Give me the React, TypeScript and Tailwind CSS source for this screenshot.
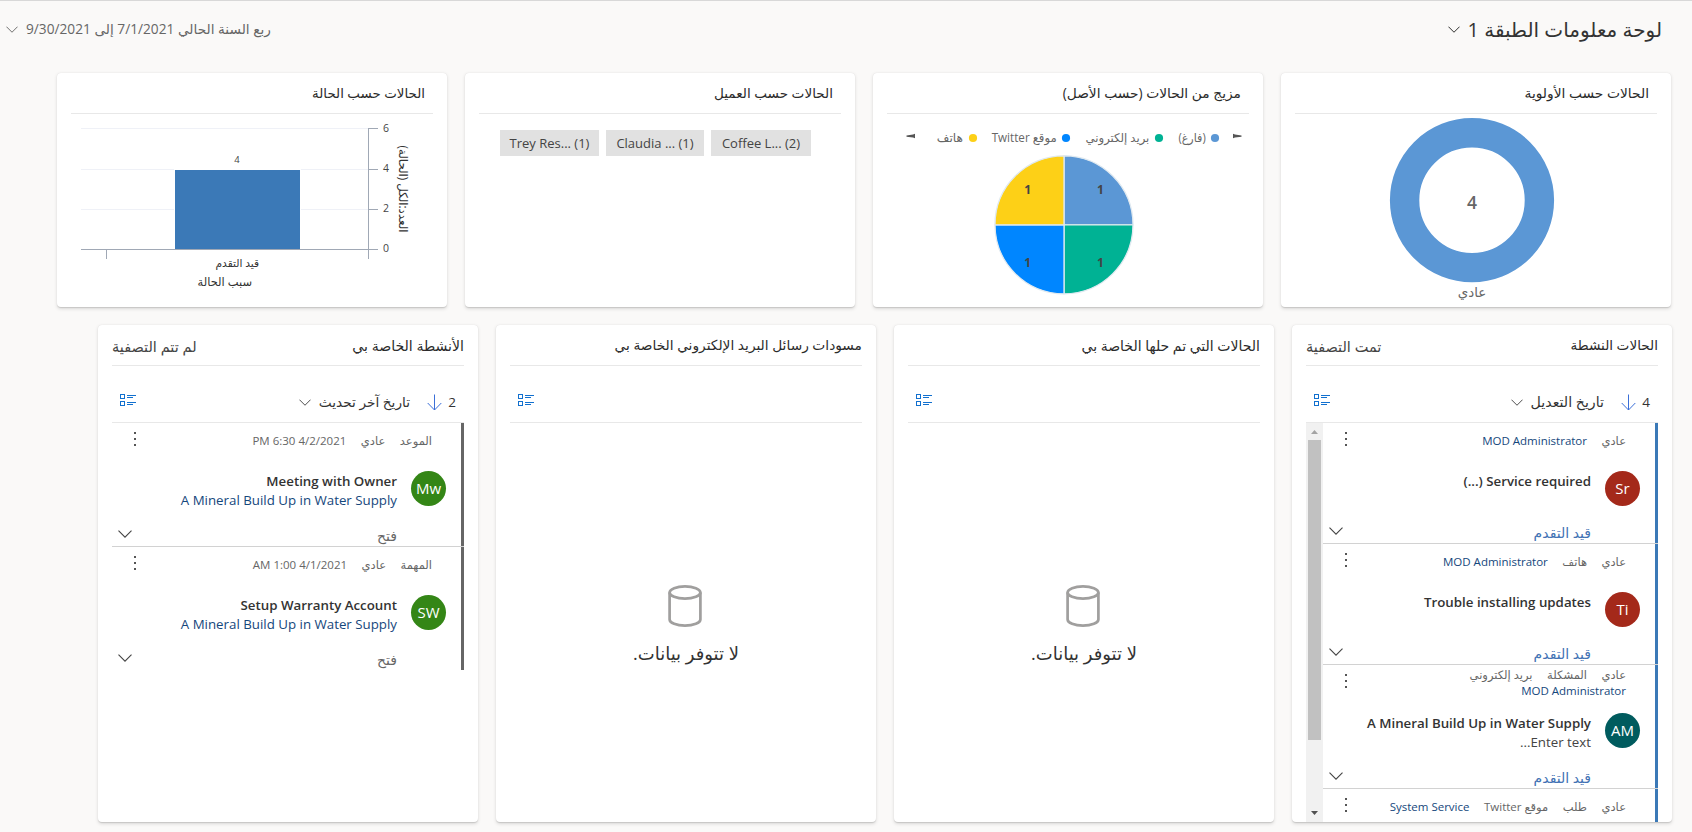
import React from "react";

const FONT = "font-['Open_Sans','DejaVu_Sans',sans-serif]";

function Chevron({ className, stroke = "#444" }: { className?: string; stroke?: string }) {
  return (
    <svg viewBox="0 0 14 8" className={className ?? "h-2 w-3.5"} fill="none" stroke={stroke} strokeWidth="1.1">
      <path d="M0.5 0.7 7 7.2 13.5 0.7" />
    </svg>
  );
}

function ListIcon() {
  return (
    <svg viewBox="0 0 17 13" className="h-[13px] w-[17px]" fill="none" stroke="#1170cf" strokeWidth="1" shapeRendering="crispEdges">
      <rect x="0.5" y="0.5" width="4" height="4" />
      <rect x="0.5" y="7.5" width="4" height="4" />
      <path d="M7 1.5h9M7 3.5h6M7 8.5h9M7 10.5h6" />
    </svg>
  );
}

function SortArrow() {
  return (
    <svg viewBox="0 0 15 17" className="h-[17px] w-[15px]" fill="none" stroke="#3b6fd8" strokeWidth="1">
      <path d="M7.5 0.5V16M0.7 9l6.8 7 6.8-7" />
    </svg>
  );
}

function Dots() {
  return (
    <svg viewBox="0 0 2 14" className="h-[14px] w-[2px]" fill="#555" shapeRendering="crispEdges">
      <rect x="0" y="0" width="2" height="2" />
      <rect x="0" y="6" width="2" height="2" />
      <rect x="0" y="12" width="2" height="2" />
    </svg>
  );
}

function Cylinder() {
  return (
    <svg viewBox="0 0 34 42" className="h-[42px] w-[34px]" fill="none" stroke="#a09f9e" strokeWidth="2.7">
      <ellipse cx="17" cy="7.5" rx="15.4" ry="6.1" />
      <path d="M1.6 7.5v27c0 3.4 6.9 6.1 15.4 6.1s15.4-2.7 15.4-6.1v-27" />
    </svg>
  );
}

const CARD = "bg-white rounded-[4px] shadow-[0_1.6px_3.6px_rgba(0,0,0,0.13),0_0.3px_0.9px_rgba(0,0,0,0.11)]";

function ChartCard({ title, size, children }: { title: string; size: string; children: React.ReactNode }) {
  return (
    <section className={`flex h-[234px] w-[390px] shrink-0 flex-col overflow-hidden ${CARD}`}>
      <div className="mx-[14px] flex h-[41px] shrink-0 items-center border-b border-[#e8e8e8] pt-px pr-2">
        <h2 className={`whitespace-nowrap text-[#2b2b2b] ${size}`}>{title}</h2>
      </div>
      {children}
    </section>
  );
}

function Donut() {
  return (
    <svg viewBox="0 0 390 193" className="h-[193px] w-[390px]" direction="ltr">
      <circle cx="191" cy="86.2" r="67.4" fill="none" stroke="#5b97d5" strokeWidth="29.4" />
      <text x="191" y="95" textAnchor="middle" fontSize="17.5" fontWeight="600" fill="#666">4</text>
      <text x="191" y="182.5" textAnchor="middle" fontSize="13.5" fill="#666" textLength="28.5" lengthAdjust="spacingAndGlyphs">عادي</text>
    </svg>
  );
}

const LEGEND = [
  { x: 342, right: 332.7, w: 27.3, label: "(فارغ)", color: "#5b97d5" },
  { x: 286, right: 276.3, w: 63.7, label: "بريد إلكتروني", color: "#00b294" },
  { x: 193, right: 183.7, w: 65, label: "موقع Twitter", color: "#0086ff" },
  { x: 100, right: 90, w: 26.2, label: "هاتف", color: "#fdd017" },
];

function Pie() {
  return (
    <svg viewBox="0 0 390 193" className="h-[193px] w-[390px]">
      <path d="M360 19.7v4.6l2-0.8 6.5-0.8v-1.2l-6.5-1z" fill="#555" />
      <path d="M42 19.7v4.6l-2-0.8-6.5-0.8v-1.2l6.5-1z" fill="#555" />
      {LEGEND.map((l) => (
        <g key={l.x}>
          <circle cx={l.x} cy="24" r="4.1" fill={l.color} />
          <text x={l.right} y="28" fontSize="12" fill="#666" direction="rtl" textAnchor="start" textLength={l.w} lengthAdjust="spacingAndGlyphs">
            {l.label}
          </text>
        </g>
      ))}
      <g stroke="#dfe9f0" strokeWidth="1.3">
        <path d="M191 110.8V41.8A69 69 0 0 1 260 110.8Z" fill="#5b97d5" />
        <path d="M191 110.8H260A69 69 0 0 1 191 179.8Z" fill="#00b294" />
        <path d="M191 110.8V179.8A69 69 0 0 1 122 110.8Z" fill="#0086ff" />
        <path d="M191 110.8H122A69 69 0 0 1 191 41.8Z" fill="#fdd017" />
      </g>
      <g fontSize="12" fontWeight="700" fill="#444" textAnchor="middle">
        <text x="227.5" y="80">1</text>
        <text x="154.7" y="80">1</text>
        <text x="227.5" y="153">1</text>
        <text x="154.7" y="153">1</text>
      </g>
    </svg>
  );
}

function Bars() {
  return (
    <svg viewBox="0 0 390 193" className="h-[193px] w-[390px]">
      <path d="M24 14.5H311M24 55.5H311M24 95.5H311" stroke="#eff1f7" />
      <rect x="117" y="55" width="127" height="80" fill="#fff" />
      <rect x="118" y="56" width="125" height="79" fill="#3b79b7" />
      <path d="M24 135.5H321M311.5 14V145M311 14.5H321M311 55.5H321M311 95.5H321M49.5 135V145" stroke="#a0a8b5" fill="none" />
      <g fontSize="10.5" fill="#444" textAnchor="middle">
        <text x="329" y="18">6</text>
        <text x="329" y="58">4</text>
        <text x="329" y="98">2</text>
        <text x="329" y="138">0</text>
        <text x="180" y="49" fontSize="9.5">4</text>
      </g>
      <text x="202" y="153" fontSize="11" fill="#333" direction="rtl" textLength="43.5" lengthAdjust="spacingAndGlyphs">قيد التقدم</text>
      <text x="195" y="172" fontSize="12" fill="#333" direction="rtl" textLength="54.5" lengthAdjust="spacingAndGlyphs">سبب الحالة</text>
      <g transform="translate(342 118.5) rotate(90)">
        <text x="0" y="0" fontSize="12" fill="#333" direction="rtl" textLength="87" lengthAdjust="spacingAndGlyphs">العدد:الكل (الحالة)</text>
      </g>
    </svg>
  );
}

function Chips() {
  return (
    <div className="flex gap-[7px] pt-4 pr-11 text-[13px] text-[#444]" dir="rtl">
      <div className="flex h-[26px] w-[100px] items-center justify-center bg-[#e1e1e1] pt-0.5"><span dir="ltr">Coffee L... (2)</span></div>
      <div className="flex h-[26px] w-[98px] items-center justify-center bg-[#e1e1e1] pt-0.5"><span dir="ltr">Claudia ... (1)</span></div>
      <div className="flex h-[26px] w-[99px] items-center justify-center bg-[#e1e1e1] pt-0.5"><span dir="ltr">Trey Res... (1)</span></div>
    </div>
  );
}

type StreamProps = {
  title: string;
  titleSize: string;
  filter?: string;
  count?: string;
  sort?: string;
  sortSize?: string;
  children: React.ReactNode;
};

function Stream({ title, titleSize, filter, count, sort, sortSize, children }: StreamProps) {
  return (
    <section className={`flex h-[497px] w-[380px] shrink-0 flex-col overflow-hidden px-[14px] ${CARD}`}>
      <div className="flex h-[41px] shrink-0 items-center justify-between border-b border-[#e8e8e8]">
        <h2 className={`pt-px whitespace-nowrap text-[#2b2b2b] ${titleSize}`}>{title}</h2>
        {filter && <span className="pt-[3px] text-[14.5px] whitespace-nowrap text-[#444]">{filter}</span>}
      </div>
      <div className="flex h-[57px] shrink-0 items-center border-b border-[#e8e8e8] pr-2 pl-2">
        {count && (
          <div className="flex h-9 items-center pt-4">
            <span className="w-[7px] text-[13.5px] text-[#333]">{count}</span>
            <span className="mr-[7px]"><SortArrow /></span>
            <span className={`mr-[17px] whitespace-nowrap text-[#333] ${sortSize}`}>{sort}</span>
            <span className="mr-2"><Chevron className="h-[7px] w-3" /></span>
          </div>
        )}
        <span className="mr-auto pt-3"><ListIcon /></span>
      </div>
      {children}
    </section>
  );
}

type Meta = { text: string; link?: boolean };

type RowProps = {
  height: string;
  bar: string;
  meta: Meta[];
  wrapped?: Meta;
  initials?: string;
  avatar?: string;
  title?: string;
  sub?: string;
  subLink?: boolean;
  status?: string;
  statusColor?: string;
  last?: boolean;
};

function Row({ height, bar, meta, wrapped, initials, avatar, title, sub, subLink, status, statusColor, last }: RowProps) {
  return (
    <div className={`flex shrink-0 flex-col ${last ? "" : "border-b border-[#d2d2d2]"} ${height}`}>
      <div className={`flex min-h-0 flex-1 flex-col border-r-[3px] ${bar}`}>
        <div className="flex h-12 shrink-0 items-start justify-between pr-[29px] pl-[22px]">
          <div className={wrapped ? "pt-[2px]" : "pt-[10px]"}>
            <div className="flex h-[15px] items-center gap-[14.5px] text-[11.5px] whitespace-nowrap text-[#666]">
              {meta.map((m) => (
                <span key={m.text} className={m.link ? "text-[#15477c]" : ""}>{m.text}</span>
              ))}
            </div>
            {wrapped && <div className="flex h-[17px] items-center text-[11.5px] text-[#15477c]">{wrapped.text}</div>}
          </div>
          <span className="pt-[9px]"><Dots /></span>
        </div>
        {title && (
          <div className="flex shrink-0 items-start pr-[15px]">
            <div className={`flex size-[35px] shrink-0 items-center justify-center rounded-full text-[15px] text-white ${avatar}`} dir="ltr">
              {initials}
            </div>
            <div className="mr-[14px] whitespace-nowrap">
              <div className="h-[19px] text-[13.3px] leading-[20px] font-semibold text-[#333]">{title}</div>
              {sub && <div className={`h-[19px] text-[13.3px] leading-[20px] ${subLink ? "text-[#15477c]" : "text-[#444]"}`}>{sub}</div>}
            </div>
          </div>
        )}
        {status && (
          <div className="mt-auto flex h-[21px] shrink-0 items-center justify-between pr-16 pl-[6px]">
            <span className={`text-[14px] ${statusColor}`}>{status}</span>
            <span className="pb-1"><Chevron /></span>
          </div>
        )}
      </div>
    </div>
  );
}

function Empty() {
  return (
    <div className="flex flex-col items-center pt-[162px]">
      <div className="pr-[3px]"><Cylinder /></div>
      <p className="mt-3 text-[18px] leading-7 whitespace-nowrap text-[#333]">لا تتوفر بيانات.</p>
    </div>
  );
}

function Scrollbar() {
  return (
    <div className="flex w-[17px] shrink-0 flex-col items-center bg-[#f1f1f1]">
      <div className="flex h-[17px] items-center">
        <svg viewBox="0 0 7 4" className="h-1 w-[7px]" fill="#a3a3a3"><path d="M0 4 3.5 0 7 4z" /></svg>
      </div>
      <div className="h-[300px] w-[13px] bg-[#c1c1c1]" />
      <div className="mt-auto flex h-[18px] items-center">
        <svg viewBox="0 0 7 4" className="h-1 w-[7px]" fill="#505050"><path d="M0 0 3.5 4 7 0z" /></svg>
      </div>
    </div>
  );
}

const BLUE = "border-[#3b79b7]";
const GRAY = "border-[#666]";

export default function App() {
  return (
    <div dir="rtl" className={`flex h-[832px] w-[1692px] flex-col overflow-hidden border-t border-[#d8d8d8] bg-[#faf9f8] ${FONT}`}>
      <header className="flex h-[72px] shrink-0 items-start justify-between pr-[30px] pl-[6px]">
        <div className="flex h-[57px] items-center gap-2">
          <h1 className="text-[20px] whitespace-nowrap text-[#333]">لوحة معلومات الطبقة 1</h1>
          <Chevron className="h-[7px] w-3" stroke="#222" />
        </div>
        <div className="flex h-[57px] items-center gap-2 text-[13.7px] text-[#666]">
          <span className="whitespace-nowrap">ربع السنة الحالي 7/1/2021 إلى 9/30/2021</span>
          <Chevron className="h-[7px] w-3" stroke="#666" />
        </div>
      </header>

      <div className="flex shrink-0 gap-[18px] pr-[21px]">
        <ChartCard title="الحالات حسب الأولوية" size="text-[13.8px]"><Donut /></ChartCard>
        <ChartCard title="مزيج من الحالات (حسب الأصل)" size="text-[13.8px]"><Pie /></ChartCard>
        <ChartCard title="الحالات حسب العميل" size="text-[13.6px]"><Chips /></ChartCard>
        <ChartCard title="الحالات حسب الحالة" size="text-[13.4px]"><Bars /></ChartCard>
      </div>

      <div className="mt-[18px] flex shrink-0 gap-[18px] pr-5">
        <Stream title="الحالات النشطة" titleSize="text-[13.6px]" filter="تمت التصفية" count="4" sort="تاريخ التعديل" sortSize="text-[14.2px]">
          <div className="flex min-h-0 flex-1">
            <div className="flex min-w-0 flex-1 flex-col overflow-hidden">
              <Row height="h-[121px]" bar={BLUE} meta={[{ text: "عادي" }, { text: "MOD Administrator", link: true }]} initials="Sr" avatar="bg-[#a4291a]" title="Service required (...)" status="قيد التقدم" statusColor="text-[#4272b4]" />
              <Row height="h-[121px]" bar={BLUE} meta={[{ text: "عادي" }, { text: "هاتف" }, { text: "MOD Administrator", link: true }]} initials="Ti" avatar="bg-[#a4291a]" title="Trouble installing updates" status="قيد التقدم" statusColor="text-[#4272b4]" />
              <Row height="h-[124px]" bar={BLUE} meta={[{ text: "عادي" }, { text: "المشكلة" }, { text: "بريد إلكتروني" }]} wrapped={{ text: "MOD Administrator", link: true }} initials="AM" avatar="bg-[#005b5e]" title="A Mineral Build Up in Water Supply" sub="Enter text..." status="قيد التقدم" statusColor="text-[#4272b4]" />
              <Row height="h-[124px]" bar={BLUE} meta={[{ text: "عادي" }, { text: "طلب" }, { text: "موقع Twitter" }, { text: "System Service", link: true }]} />
            </div>
            <Scrollbar />
          </div>
        </Stream>
        <Stream title="الحالات التي تم حلها الخاصة بي" titleSize="text-[14px]"><Empty /></Stream>
        <Stream title="مسودات رسائل البريد الإلكتروني الخاصة بي" titleSize="text-[13.75px]"><Empty /></Stream>
        <Stream title="الأنشطة الخاصة بي" titleSize="text-[14.1px]" filter="لم تتم التصفية" count="2" sort="تاريخ آخر تحديث" sortSize="text-[13.7px]">
          <Row height="h-[124px]" bar={GRAY} meta={[{ text: "الموعد" }, { text: "عادي" }, { text: "4/2/2021 6:30 PM" }]} initials="Mw" avatar="bg-[#348616]" title="Meeting with Owner" sub="A Mineral Build Up in Water Supply" subLink status="فتح" statusColor="text-[#666]" />
          <Row height="h-[123px]" bar={GRAY} last meta={[{ text: "المهمة" }, { text: "عادي" }, { text: "4/1/2021 1:00 AM" }]} initials="SW" avatar="bg-[#348616]" title="Setup Warranty Account" sub="A Mineral Build Up in Water Supply" subLink status="فتح" statusColor="text-[#666]" />
        </Stream>
      </div>
    </div>
  );
}
